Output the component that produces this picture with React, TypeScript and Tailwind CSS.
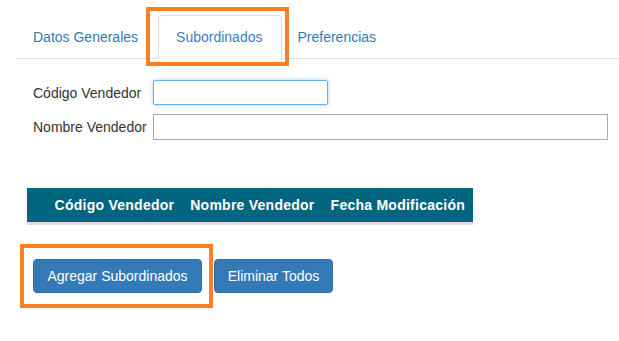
import React from 'react';

export default function App() {
  return (
    <div className="w-[619px] h-[341px] bg-white font-['Liberation_Sans',Arial,sans-serif] text-[14px] leading-[20px] text-[#333] pt-[15px] overflow-hidden">
      {/* tabs */}
      <ul className="ml-[16px] flex border-b border-[#ddd]">
        <li className="mr-[3px] -mb-px">
          <a className="block pl-[16px] pr-[16px] py-[11px] border border-transparent rounded-t-[4px] text-[#337ab7]">
            Datos Generales
          </a>
        </li>
        <li className="relative -mb-px">
          <a className="block pl-[17px] pr-[19px] py-[11px] border border-[#ddd] border-b-transparent rounded-t-[4px] bg-white text-[#3d7cc2]">
            Subordinados
          </a>
          <div className="absolute left-[-12px] top-[-8px] right-[-7px] bottom-[-7px] border-4 border-[#fd7f24] pointer-events-none" />
        </li>
        <li className="-mb-px">
          <a className="block pl-[14px] pr-[15px] py-[11px] border border-transparent rounded-t-[4px] text-[#337ab7]">
            Preferencias
          </a>
        </li>
      </ul>

      {/* search form */}
      <div className="pl-[33px] pt-[21px] flex flex-col gap-[9px]">
        <div className="flex items-center">
          <label className="w-[120px]">Código Vendedor</label>
          <input
            type="text"
            className="w-[175px] h-[25px] border border-[#66afe9] rounded-[2px] shadow-[0_0_4px_rgba(102,175,233,0.6)] outline-none"
          />
        </div>
        <div className="flex items-center">
          <label className="w-[120px]">Nombre Vendedor</label>
          <input type="text" className="w-[455px] h-[26px] border border-[#aaa] outline-none" />
        </div>
      </div>

      {/* results table */}
      <div className="ml-[27px] mt-[48px] w-[446px]">
        <table className="w-full border-collapse">
          <thead>
            <tr className="bg-[#006680] text-white font-bold border-b-[3px] border-[#ddd] tracking-[0.25px]">
              <th className="w-[20px] h-[35px] p-0"></th>
              <th className="h-[35px] px-[8px] text-left whitespace-nowrap">Código Vendedor</th>
              <th className="h-[35px] px-[8px] text-left whitespace-nowrap">Nombre Vendedor</th>
              <th className="h-[35px] px-[8px] text-left whitespace-nowrap">Fecha Modificación</th>
            </tr>
          </thead>
        </table>
      </div>

      {/* actions */}
      <div className="ml-[33px] mt-[34px] flex gap-[12px]">
        <div className="relative">
          <button className="w-[169px] h-[34px] bg-[#337ab7] border border-[#2e6da4] rounded-[4px] text-white">
            Agregar Subordinados
          </button>
          <div className="absolute left-[-13px] top-[-15px] right-[-11px] bottom-[-15px] border-4 border-[#fd7f24] pointer-events-none" />
        </div>
        <button className="w-[119px] h-[34px] bg-[#337ab7] border border-[#2e6da4] rounded-[4px] text-white">
          Eliminar Todos
        </button>
      </div>
    </div>
  );
}
